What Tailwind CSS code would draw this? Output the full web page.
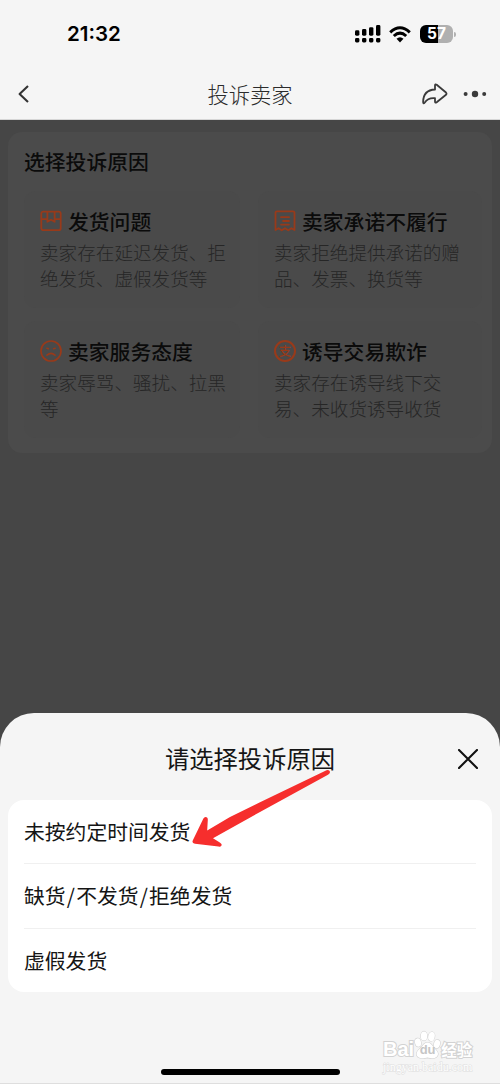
<!DOCTYPE html>
<html lang="zh-CN">
<head>
<meta charset="utf-8">
<title>投诉卖家</title>
<script src="https://cdn.jsdelivr.net/npm/@tailwindcss/browser@4"></script>
</head>
<body class="bg-[#464646]">
<div class="relative flex h-[1084px] w-[500px] flex-col overflow-hidden bg-[#464646] font-['Noto_Sans_CJK_SC',sans-serif]">
  <header class="flex h-[120px] flex-col border-b border-[#d6d6d6] bg-[#f5f5f5]">
    <div class="flex h-[68px] items-center pl-[67px] pr-[44px]">
      <span class="font-['Inter',sans-serif] text-[20.5px] font-semibold leading-none text-black">21:32</span>
      <div class="ml-auto flex items-center">
        <svg class="mr-[8px]" width="26" height="18" viewBox="0 0 26 18">
          <g fill="#000"><rect x="0" y="5.3" width="4.4" height="5.4" rx="1.4"/><rect x="7" y="4" width="4.4" height="6.7" rx="1.4"/><rect x="14" y="2.2" width="4.4" height="8.5" rx="1.4"/><rect x="21" y="0" width="4.4" height="10.7" rx="1.4"/><rect x="0" y="13" width="4.4" height="4.4" rx="1.4"/><rect x="7" y="13" width="4.4" height="4.4" rx="1.4"/><rect x="14" y="13" width="4.4" height="4.4" rx="1.4"/><rect x="21" y="13" width="4.4" height="4.4" rx="1.4"/></g>
        </svg>
        <svg class="mr-[9px]" width="22" height="17" viewBox="0 0 22 17">
          <g fill="none" stroke="#000" stroke-width="3"><path d="M1.2 6.3 Q11 -2.8 20.8 6.3"/><path d="M4.8 10 Q11 4.3 17.2 10"/></g><path d="M7.5 12.8 Q11 9.8 14.5 12.8 L11 16.6 Z" fill="#000"/>
        </svg>
        <div class="flex h-[18px] w-[33px] items-center justify-center rounded-[6px] bg-linear-to-r from-black from-55% to-[#b0b0b0] to-55% font-['Inter',sans-serif] text-[15.5px] font-bold leading-none text-white">57</div>
        <div class="ml-px h-[5px] w-[2px] rounded-r-full bg-[#b0b0b0]"></div>
      </div>
    </div>
    <div class="grid h-[51px] grid-cols-3 items-center pl-[17px] pr-[13px]">
      <svg width="14" height="20" viewBox="0 0 14 20"><path d="M11 2 L2.6 10 L11 18" fill="none" stroke="#333" stroke-width="2.1" stroke-linejoin="round"/></svg>
      <h1 class="pr-[4px] text-center text-[21.3px] font-light text-[#2b2b2b]">投诉卖家</h1>
      <div class="flex items-center justify-end gap-[15px]">
        <svg width="26" height="22" viewBox="0 0 26 22"><path d="M13 2.5 Q13 .6 14.7 1.8 L24 9.5 Q25 10.7 24 11.8 L14.7 19.2 Q13 20.3 13 18.5 V15.2 Q6 14.5 2.8 19.5 Q1.2 21.5 1.1 19 Q1.3 7 13 6.5 Z" fill="none" stroke="#3a3a3a" stroke-width="1.8" stroke-linejoin="round"/></svg>
        <svg width="24" height="8" viewBox="0 0 24 8" fill="#3a3a3a"><circle cx="2.6" cy="4" r="2"/><circle cx="12" cy="4" r="3.2"/><circle cx="21.2" cy="4" r="2"/></svg>
      </div>
    </div>
  </header>

  <main class="mx-2 mt-3 h-[321px] rounded-[14px] bg-[#4b4b4b] px-4 pt-[13px]">
    <h2 class="h-[46px] text-[20.8px] font-medium leading-[32px] text-[#0b0b0b]">选择投诉原因</h2>
    <div class="grid grid-cols-[216px_224px] gap-x-[18px] gap-y-[13px]">
      <section class="h-[117px] rounded-[12px] bg-[#4a4a4a] pl-4 pr-[8px] pt-[13px]">
        <div class="flex h-[34px] items-center gap-[6px]">
          <svg width="22" height="22" viewBox="0 0 22 22" fill="none" stroke="#983a1a" stroke-width="1.8" stroke-linejoin="round"><rect x="1.3" y="1.6" width="19.4" height="18.6" rx="2"/><path d="M1.5 9.2 H7.4 M14.6 9.2 H20.5 M7.4 1.8 V11.8 L11 9.8 L14.6 11.8 V1.8"/></svg>
          <h3 class="whitespace-nowrap text-[20.8px] font-medium leading-[34px] text-[#0b0b0b]">发货问题</h3>
        </div>
        <p class="mt-px text-[18.6px] font-light leading-[26px] text-[#262626]">卖家存在延迟发货、拒<br>绝发货、虚假发货等</p>
      </section>
      <section class="h-[117px] rounded-[12px] bg-[#4a4a4a] pl-4 pr-[8px] pt-[13px]">
        <div class="flex h-[34px] items-center gap-[6px]">
          <svg width="22" height="22" viewBox="0 0 22 22" fill="none" stroke="#983a1a" stroke-width="1.8" stroke-linejoin="round" stroke-linecap="round"><path d="M1.5 20 V2.8 Q1.5 1.4 2.9 1.4 H19.1 Q20.5 1.4 20.5 2.8 V20 L17.4 18.2 L14.3 20.3 L11 18.2 L7.7 20.3 L4.6 18.2 Z M7 7.2 H15 M9 11 H15 M7 14.6 H15"/></svg>
          <h3 class="whitespace-nowrap text-[20.8px] font-medium leading-[34px] text-[#0b0b0b]">卖家承诺不履行</h3>
        </div>
        <p class="mt-px text-[18.6px] font-light leading-[26px] text-[#262626]">卖家拒绝提供承诺的赠<br>品、发票、换货等</p>
      </section>
      <section class="h-[117px] rounded-[12px] bg-[#4a4a4a] pl-4 pr-[8px] pt-[13px]">
        <div class="flex h-[34px] items-center gap-[6px]">
          <svg width="22" height="22" viewBox="0 0 22 22" fill="none" stroke="#983a1a" stroke-width="1.7" stroke-linecap="round"><circle cx="11" cy="11" r="10"/><path d="M7 15.2 Q11 11.6 15 15.2"/><path d="M6.8 8.2 L8.4 8.8 M15.2 8.2 L13.6 8.8" stroke-width="1.5"/></svg>
          <h3 class="whitespace-nowrap text-[20.8px] font-medium leading-[34px] text-[#0b0b0b]">卖家服务态度</h3>
        </div>
        <p class="mt-px text-[18.6px] font-light leading-[26px] text-[#262626]">卖家辱骂、骚扰、拉黑<br>等</p>
      </section>
      <section class="h-[117px] rounded-[12px] bg-[#4a4a4a] pl-4 pr-[8px] pt-[13px]">
        <div class="flex h-[34px] items-center gap-[6px]">
          <div class="flex size-[22px] items-center justify-center rounded-full border-2 border-[#983a1a] text-[12.5px] font-medium leading-none text-[#983a1a]">支</div>
          <h3 class="whitespace-nowrap text-[20.8px] font-medium leading-[34px] text-[#0b0b0b]">诱导交易欺诈</h3>
        </div>
        <p class="mt-px text-[18.6px] font-light leading-[26px] text-[#262626]">卖家存在诱导线下交<br>易、未收货诱导收货</p>
      </section>
    </div>
  </main>

  <section class="mt-auto flex h-[371px] flex-col rounded-t-[34px] border-b border-[#dedede] bg-[#f5f5f5] px-2">
    <div class="grid h-[87px] grid-cols-[1fr_auto_1fr] items-center pr-[14px] pl-[14px] pt-[4px]">
      <span></span>
      <h2 class="text-[24.3px] font-normal text-[#151515]">请选择投诉原因</h2>
      <svg class="justify-self-end" width="20" height="20" viewBox="0 0 20 20"><path d="M1 1 L19 19 M19 1 L1 19" stroke="#111" stroke-width="2.1" stroke-linecap="round"/></svg>
    </div>
    <ul class="flex h-[192px] flex-col rounded-[16px] bg-white px-4 text-[20.8px] text-[#151515]">
      <li class="flex h-[64px] items-center border-b border-[#f0f0f0]">未按约定时间发货</li>
      <li class="flex h-[65px] items-center border-b border-[#f0f0f0]"><span>缺货<span class="mx-[1.2px]">/</span>不发货<span class="mx-[1.2px]">/</span>拒绝发货</span></li>
      <li class="flex h-[63px] items-center">虚假发货</li>
    </ul>
    <div class="mx-auto mt-auto mb-[8px] h-[6px] w-[179px] rounded-full bg-black"></div>
  </section>

  <svg class="absolute left-[188px] top-[765px]" width="145" height="86" viewBox="188 765 145 86"><path d="M326.5 770.2 Q329.3 769.3 330 771.8 Q330.2 773.6 328 774.8 L260 812 L213 838.3 L219.8 842.4 Q222.6 844.1 221.3 845.8 Q220.6 846.9 218.5 846.6 L195 843.8 Q191.3 843.2 193 840 L203.4 818.5 Q204.5 816.4 206.6 817.2 Q208 817.8 207.8 820 L207.2 830.5 L230 817 L260 802.3 Z" fill="#f62e2d"/></svg>

  <div class="absolute left-[383px] top-[1029px] w-[92px] text-white [-webkit-text-stroke:2px_#d2d2d2] [paint-order:stroke_fill]">
    <div class="flex h-[31px] items-end leading-none">
      <span class="font-['Liberation_Sans',sans-serif] text-[20px] font-bold leading-[21px]">Bai</span>
      <span class="relative flex h-[31px] w-[27px] justify-center">
        <svg class="absolute inset-0" width="27" height="31" viewBox="0 0 27 31" fill="#fff" stroke="#d2d2d2" stroke-width="1.1"><ellipse cx="4" cy="13.5" rx="3" ry="4.2" transform="rotate(-12 4 13.5)"/><ellipse cx="10" cy="7" rx="3.2" ry="4.6"/><ellipse cx="17.5" cy="7.5" rx="3.2" ry="4.6" transform="rotate(12 17.5 7.5)"/><ellipse cx="23" cy="15" rx="3" ry="4.2" transform="rotate(12 23 15)"/><path d="M13.5 13.5 Q16.5 13.5 18.5 17 Q20 19 22.5 21.5 Q25.5 25 22.5 28 Q20 30 13.5 28.6 Q7 30 4 28 Q1 25 4 21.5 Q6.5 19 8.5 17 Q10.5 13.5 13.5 13.5 Z"/></svg>
        <span class="relative mt-[14px] font-['Liberation_Sans',sans-serif] text-[13px] font-bold text-[#c6c6c6] [-webkit-text-stroke:0]">du</span>
      </span>
      <span class="mb-[3px] whitespace-nowrap text-[15.5px] font-bold">经验</span>
    </div>
    <div class="mt-px whitespace-nowrap font-['Liberation_Serif',serif] text-[12px] leading-[12px] [-webkit-text-stroke:1px_#dedede]">jingyan.baidu.com</div>
  </div>
</div>
</body>
</html>
